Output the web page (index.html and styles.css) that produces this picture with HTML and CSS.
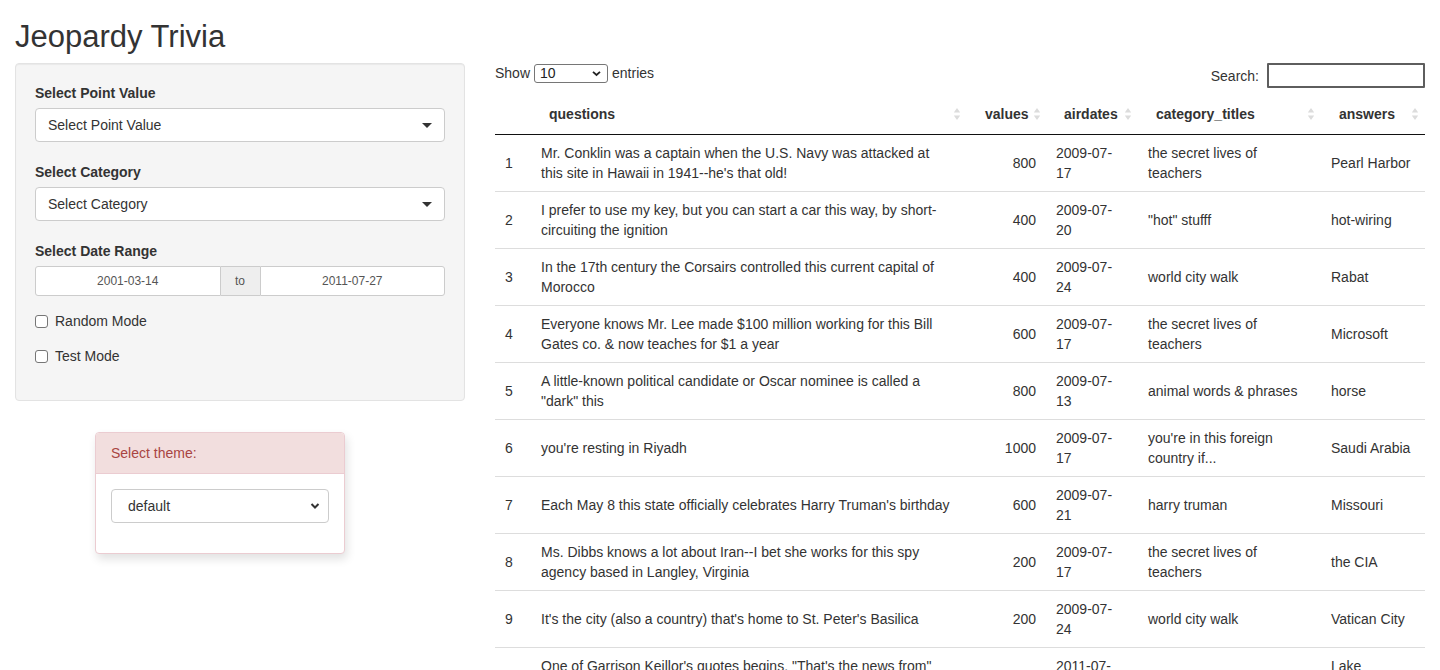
FILE: index.html
```html
<!DOCTYPE html>
<html lang="en">
<head>
<meta charset="utf-8">
<title>Jeopardy Trivia</title>
<link rel="stylesheet" href="styles.css">
</head>
<body>
<div class="container">
  <h2 class="title">Jeopardy Trivia</h2>
  <div class="row">
    <div class="sidebar">
      <div class="well">
        <div class="group">
          <label class="lbl">Select Point Value</label>
          <div class="selectize"><span>Select Point Value</span><span class="caret"></span></div>
        </div>
        <div class="group">
          <label class="lbl">Select Category</label>
          <div class="selectize"><span>Select Category</span><span class="caret"></span></div>
        </div>
        <div class="group date-group">
          <label class="lbl">Select Date Range</label>
          <div class="daterange">
            <div class="dinput dleft">2001-03-14</div>
            <div class="addon">to</div>
            <div class="dinput dright">2011-07-27</div>
          </div>
        </div>
        <div class="check"><span class="box"></span><span>Random Mode</span></div>
        <div class="check"><span class="box"></span><span>Test Mode</span></div>
      </div>
      <div class="theme-panel">
        <div class="theme-head">Select theme:</div>
        <div class="theme-body">
          <div class="theme-select"><span>default</span>
            <svg width="10" height="8" viewBox="0 0 10 8"><path d="M1.5 2 L5 5.5 L8.5 2" fill="none" stroke="#333" stroke-width="2"/></svg>
          </div>
        </div>
      </div>
    </div>
    <div class="main">
      <div class="dt-top">
        <div class="dt-length">Show
          <div class="len-select"><span>10</span>
            <svg width="9" height="7" viewBox="0 0 9 7"><path d="M1 1.8 L4.5 5 L8 1.8" fill="none" stroke="#222" stroke-width="1.8"/></svg>
          </div>
          entries</div>
        <div class="dt-filter">Search: <div class="search-box"></div></div>
      </div>
      <table class="dt">
        <colgroup>
          <col class="c0"><col class="c1"><col class="c2"><col class="c3"><col class="c4"><col class="c5">
        </colgroup>
        <thead>
          <tr>
            <th class="th-idx"></th>
            <th><div class="thi"><span class="tt">questions</span><svg class="sort" width="8" height="14" viewBox="0 0 8 14"><path d="M4 1 L7.2 5.6 L0.8 5.6 Z M0.8 8.4 L7.2 8.4 L4 13 Z" fill="#dcdcdc"/></svg></div></th>
            <th><div class="thi"><span class="tt right">values</span><svg class="sort" width="8" height="14" viewBox="0 0 8 14"><path d="M4 1 L7.2 5.6 L0.8 5.6 Z M0.8 8.4 L7.2 8.4 L4 13 Z" fill="#dcdcdc"/></svg></div></th>
            <th><div class="thi"><span class="tt">airdates</span><svg class="sort" width="8" height="14" viewBox="0 0 8 14"><path d="M4 1 L7.2 5.6 L0.8 5.6 Z M0.8 8.4 L7.2 8.4 L4 13 Z" fill="#dcdcdc"/></svg></div></th>
            <th><div class="thi"><span class="tt">category_titles</span><svg class="sort" width="8" height="14" viewBox="0 0 8 14"><path d="M4 1 L7.2 5.6 L0.8 5.6 Z M0.8 8.4 L7.2 8.4 L4 13 Z" fill="#dcdcdc"/></svg></div></th>
            <th><div class="thi"><span class="tt">answers</span><svg class="sort" width="8" height="14" viewBox="0 0 8 14"><path d="M4 1 L7.2 5.6 L0.8 5.6 Z M0.8 8.4 L7.2 8.4 L4 13 Z" fill="#dcdcdc"/></svg></div></th>
          </tr>
        </thead>
        <tbody>
          <tr><td>1</td><td>Mr. Conklin was a captain when the U.S. Navy was attacked at<br>this site in Hawaii in 1941--he's that old!</td><td class="num">800</td><td>2009-07-<br>17</td><td>the secret lives of<br>teachers</td><td>Pearl Harbor</td></tr>
          <tr><td>2</td><td>I prefer to use my key, but you can start a car this way, by short-<br>circuiting the ignition</td><td class="num">400</td><td>2009-07-<br>20</td><td>"hot" stufff</td><td>hot-wiring</td></tr>
          <tr><td>3</td><td>In the 17th century the Corsairs controlled this current capital of<br>Morocco</td><td class="num">400</td><td>2009-07-<br>24</td><td>world city walk</td><td>Rabat</td></tr>
          <tr><td>4</td><td>Everyone knows Mr. Lee made $100 million working for this Bill<br>Gates co. &amp; now teaches for $1 a year</td><td class="num">600</td><td>2009-07-<br>17</td><td>the secret lives of<br>teachers</td><td>Microsoft</td></tr>
          <tr><td>5</td><td>A little-known political candidate or Oscar nominee is called a<br>"dark" this</td><td class="num">800</td><td>2009-07-<br>13</td><td>animal words &amp; phrases</td><td>horse</td></tr>
          <tr><td>6</td><td>you're resting in Riyadh</td><td class="num">1000</td><td>2009-07-<br>17</td><td>you're in this foreign<br>country if...</td><td>Saudi Arabia</td></tr>
          <tr><td>7</td><td>Each May 8 this state officially celebrates Harry Truman's birthday</td><td class="num">600</td><td>2009-07-<br>21</td><td>harry truman</td><td>Missouri</td></tr>
          <tr><td>8</td><td>Ms. Dibbs knows a lot about Iran--I bet she works for this spy<br>agency based in Langley, Virginia</td><td class="num">200</td><td>2009-07-<br>17</td><td>the secret lives of<br>teachers</td><td>the CIA</td></tr>
          <tr><td>9</td><td>It's the city (also a country) that's home to St. Peter's Basilica</td><td class="num">200</td><td>2009-07-<br>24</td><td>world city walk</td><td>Vatican City</td></tr>
          <tr><td>10</td><td>One of Garrison Keillor's quotes begins, "That's the news from"<br>this Minnesota town</td><td class="num">400</td><td>2011-07-<br>27</td><td>literary quotes</td><td>Lake<br>Wobegon</td></tr>
        </tbody>
      </table>
    </div>
  </div>
</div>
</body>
</html>
```

FILE: styles.css
```css
* { box-sizing: border-box; }
html, body { margin: 0; padding: 0; background: #fff; }
body {
  font-family: "Liberation Sans", Arial, Helvetica, sans-serif;
  font-size: 14px;
  line-height: 20px;
  color: #333;
}
.container { padding: 0 15px; }
.title {
  font-size: 31px;
  font-weight: normal;
  line-height: 33px;
  margin: 20px 0 10px 0;
  color: #333;
}
.row { display: flex; margin: 0 -15px; }
.sidebar { width: 480px; flex: none; padding: 0 15px; }
.main { width: 960px; flex: none; padding: 0 15px; }

.well {
  background: #f5f5f5;
  border: 1px solid #e3e3e3;
  border-radius: 4px;
  box-shadow: inset 0 1px 1px rgba(0,0,0,.05);
  padding: 19px 19px 19px 19px;
}
.group { margin-bottom: 20px; }
.group.date-group { margin-bottom: 15px; }
.lbl { display: block; font-weight: bold; margin-bottom: 5px; }
.selectize {
  display: flex;
  align-items: center;
  justify-content: space-between;
  height: 34px;
  background: #fff;
  border: 1px solid #ccc;
  border-radius: 4px;
  padding: 6px 12px;
  color: #333;
}
.caret {
  width: 0; height: 0;
  border-left: 5px solid transparent;
  border-right: 5px solid transparent;
  border-top: 5px solid #333;
}
.daterange { display: flex; height: 30px; }
.dinput {
  flex: 1;
  background: #fff;
  border: 1px solid #ccc;
  font-size: 12px;
  line-height: 28px;
  text-align: center;
  color: #555;
}
.dleft { border-radius: 3px 0 0 3px; }
.dright { border-radius: 0 3px 3px 0; }
.addon {
  width: 39px;
  flex: none;
  background: #eee;
  border-top: 1px solid #ccc;
  border-bottom: 1px solid #ccc;
  font-size: 12px;
  line-height: 28px;
  text-align: center;
  color: #555;
}
.check { display: flex; align-items: center; gap: 7px; height: 20px; margin-bottom: 15px; }
.box {
  width: 13px; height: 13px;
  border: 1px solid #767676;
  border-radius: 3px;
  background: #fff;
}

.theme-panel {
  width: 250px;
  margin: 31px 0 0 80px;
  background: #fff;
  border: 1px solid #ebccd1;
  border-radius: 4px;
  box-shadow: 2px 5px 10px rgba(0,0,0,.12);
}
.theme-head {
  background: #f2dede;
  color: #a94442;
  padding: 10px 15px;
  border-bottom: 1px solid #ebccd1;
  border-radius: 3px 3px 0 0;
}
.theme-body { padding: 15px 15px 30px 15px; }
.theme-select {
  height: 34px;
  border: 1px solid #ccc;
  border-radius: 4px;
  display: flex;
  align-items: center;
  justify-content: space-between;
  padding: 0 8px 0 16px;
  color: #333;
}

.dt-top { display: flex; justify-content: space-between; height: 25px; margin-bottom: 6px; }
.dt-length { display: flex; align-items: flex-start; gap: 4px; line-height: 20px; }
.len-select {
  width: 74px;
  height: 19px;
  margin-top: 1px;
  border: 1px solid #767676;
  border-radius: 3px;
  display: flex;
  align-items: center;
  justify-content: space-between;
  padding: 0 6px 0 5px;
  line-height: 17px;
  color: #222;
}
.dt-filter { display: flex; align-items: center; gap: 8px; }
.search-box {
  width: 158px;
  height: 25px;
  border: 2px solid #5e5e5e;
  border-radius: 1px;
  background: #fff;
}

.dt { width: 930px; border-collapse: collapse; table-layout: fixed; }
.c0 { width: 36px; }
.c1 { width: 436px; }
.c2 { width: 79px; }
.c3 { width: 92px; }
.c4 { width: 183px; }
.c5 { width: 104px; }
.dt th {
  padding: 10px 6px 10px 18px;
  font-weight: bold;
  text-align: left;
  border-bottom: 1px solid #111;
}
.thi { display: flex; align-items: center; gap: 4px; }
.tt { flex: 1; white-space: nowrap; }
.tt.right { text-align: right; }
.sort { flex: none; }
.dt td {
  padding: 8px 10px;
  vertical-align: middle;
  color: #333;
}
.dt tbody tr + tr td { border-top: 1px solid #ddd; }
.dt td.num { text-align: right; }
```
